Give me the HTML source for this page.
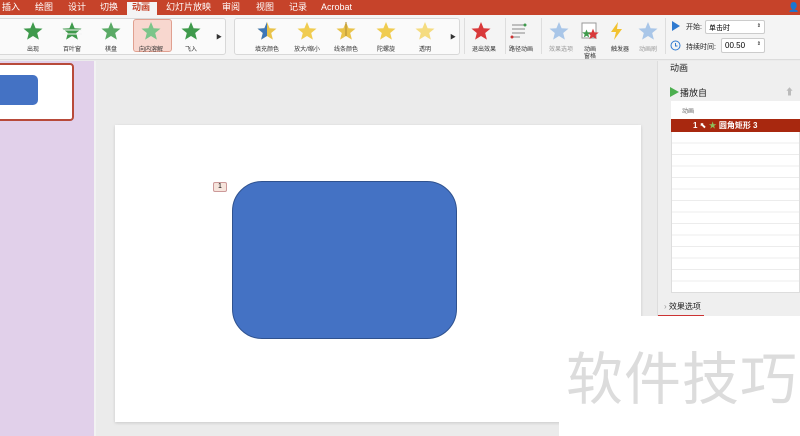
<!DOCTYPE html>
<html><head><meta charset="utf-8"><style>
*{margin:0;padding:0;box-sizing:border-box}
body{width:800px;height:436px;overflow:hidden;position:relative;background:#ebebeb;font-family:"Liberation Sans","Noto Sans CJK SC",sans-serif;}
.a{position:absolute}
.top{left:0;top:0;width:800px;height:15px;background:#c6432a}
.m{position:absolute;top:1px;font-size:9px;color:#fff;line-height:13px}
.rib{left:0;top:15px;width:800px;height:45px;background:#f4f4f4;border-bottom:1px solid #dcdcdc}
.lb{position:absolute;font-size:6px;color:#333;white-space:nowrap;transform:translateX(-50%);top:44px}
.ic{position:absolute;transform:translateX(-50%);top:21px}
.box{position:absolute;border:1px solid #d8d8d8;background:#fafafa;border-radius:3px}
</style></head><body>
<div class="a top"></div>
<div class="m" style="left:2px">插入</div>
<div class="m" style="left:35px">绘图</div>
<div class="m" style="left:68px">设计</div>
<div class="m" style="left:100px">切换</div>
<div class="a" style="left:127px;top:2px;width:30px;height:14px;background:#f4f4f4"></div>
<div class="m" style="left:132px;color:#c6432a;font-weight:bold">动画</div>
<div class="m" style="left:166px">幻灯片放映</div>
<div class="m" style="left:222px">审阅</div>
<div class="m" style="left:256px">视图</div>
<div class="m" style="left:289px">记录</div>
<div class="m" style="left:321px">Acrobat</div>
<div class="m" style="left:788px">👤</div>
<div class="a rib"></div>
<div class="box" style="left:-3px;top:18px;width:229px;height:37px"></div>
<div class="box" style="left:234px;top:18px;width:226px;height:37px"></div>
<div class="a" style="left:133px;top:19px;width:39px;height:33px;background:#f8d7cf;border:1px solid #e0a090;border-radius:3px"></div>
<svg width="0" height="0" style="position:absolute"><defs><polygon id="s" points="10,1 12.6,7.2 19.5,7.6 14.2,12 15.9,18.6 10,15 4.1,18.6 5.8,12 0.5,7.6 7.4,7.2"/></defs></svg>
<svg class="ic" style="left:33px" width="20" height="20"><use href="#s" fill="#3f9a4c"/></svg>
<svg class="ic" style="left:72px" width="20" height="20"><use href="#s" fill="#3f9a4c"/><path d="M0 9h20M0 13h20" stroke="#f4f4f4"/></svg>
<svg class="ic" style="left:111px" width="20" height="20"><use href="#s" fill="#5aaa66"/></svg>
<svg class="ic" style="left:151px" width="20" height="20"><use href="#s" fill="#7cc58a"/></svg>
<svg class="ic" style="left:191px" width="20" height="20"><use href="#s" fill="#3f9a4c"/></svg>
<div class="lb" style="left:33px">出现</div><div class="lb" style="left:72px">百叶窗</div><div class="lb" style="left:111px">棋盘</div><div class="lb" style="left:151px">向内溶解</div><div class="lb" style="left:191px">飞入</div>
<div class="a" style="left:216px;top:32px;font-size:6px;color:#333">▶</div>
<svg class="ic" style="left:267px" width="20" height="20"><use href="#s" fill="#e9c34a"/><path d="M10 1L7.4 7.2 0.5 7.6 5.8 12 4.1 18.6 10 15Z" fill="#3d77b8"/></svg>
<svg class="ic" style="left:307px" width="20" height="20"><use href="#s" fill="#f0cc50"/></svg>
<svg class="ic" style="left:346px" width="20" height="20"><use href="#s" fill="#e9c34a"/><path d="M10 1V15" stroke="#b08a30"/></svg>
<svg class="ic" style="left:386px" width="20" height="20"><use href="#s" fill="#f0cc50"/></svg>
<svg class="ic" style="left:425px" width="20" height="20"><use href="#s" fill="#f5dc80"/></svg>
<div class="lb" style="left:267px">填充颜色</div><div class="lb" style="left:307px">放大/缩小</div><div class="lb" style="left:346px">线条颜色</div><div class="lb" style="left:386px">陀螺旋</div><div class="lb" style="left:425px">透明</div>
<div class="a" style="left:450px;top:32px;font-size:6px;color:#333">▶</div>
<svg class="ic" style="left:481px" width="20" height="20"><use href="#s" fill="#d9393a"/></svg>
<svg class="ic" style="left:519px" width="20" height="20"><path d="M3 4h13M3 8h13M3 12h13M3 16h8" stroke="#888" fill="none"/><circle cx="16" cy="4" r="1.5" fill="#3f9a4c"/><circle cx="3" cy="16" r="1.5" fill="#c33"/></svg>
<svg class="ic" style="left:559px" width="20" height="20"><use href="#s" fill="#a9c6e8"/></svg>
<svg class="ic" style="left:590px" width="20" height="20"><rect x="2" y="2" width="14" height="15" fill="#fff" stroke="#999"/><use href="#s" fill="#d9393a" transform="translate(7,7) scale(.6)"/><use href="#s" fill="#3f9a4c" transform="translate(2,8) scale(.45)"/></svg>
<svg class="ic" style="left:617px" width="20" height="20"><path d="M11 1L4 11h5l-2 8 8-11h-5z" fill="#f2c230"/></svg>
<svg class="ic" style="left:648px" width="20" height="20"><use href="#s" fill="#a9c6e8"/></svg>
<div class="lb" style="left:484px">退出效果</div><div class="lb" style="left:521px">路径动画</div><div class="lb" style="left:561px;color:#999">效果选项</div><div class="lb" style="left:590px">动画</div><div class="lb" style="left:590px;top:51px">窗格</div><div class="lb" style="left:620px">触发器</div><div class="lb" style="left:648px;color:#999">动画刷</div>
<div class="a" style="left:464px;top:18px;width:1px;height:36px;background:#ddd"></div>
<div class="a" style="left:505px;top:18px;width:1px;height:36px;background:#ddd"></div>
<div class="a" style="left:541px;top:18px;width:1px;height:36px;background:#ddd"></div>
<div class="a" style="left:665px;top:18px;width:1px;height:36px;background:#ddd"></div>
<svg class="a" style="left:671px;top:21px" width="10" height="10"><path d="M1 0L9 5 1 10z" fill="#2f7ad0"/></svg>
<div class="a" style="left:686px;top:22px;font-size:7px;color:#222">开始:</div>
<div class="a" style="left:705px;top:20px;width:60px;height:14px;background:#fff;border:1px solid #ccc;border-radius:2px;font-size:7px;padding:2px 3px">单击时<span style="float:right;font-size:5px">⇕</span></div>
<svg class="a" style="left:670px;top:40px" width="11" height="11"><circle cx="5.5" cy="5.5" r="4.5" fill="none" stroke="#2f7ad0"/><path d="M5.5 3v3h2" stroke="#2f7ad0" fill="none"/></svg>
<div class="a" style="left:686px;top:42px;font-size:7px;color:#222">持续时间:</div>
<div class="a" style="left:721px;top:38px;width:44px;height:15px;background:#fff;border:1px solid #ccc;border-radius:2px;font-size:8px;padding:2px 3px">00.50<span style="float:right;font-size:5px">⇕</span></div>
<div class="a" style="left:0;top:61px;width:94px;height:375px;background:#e1d0ea"></div>
<div class="a" style="left:94px;top:61px;width:2px;height:375px;background:#f2f2f2"></div>
<div class="a" style="left:-4px;top:63px;width:78px;height:58px;background:#fff;border:2px solid #b84a3a;border-radius:4px"></div>
<div class="a" style="left:-6px;top:75px;width:44px;height:30px;background:#4472c4;border-radius:5px"></div>
<div class="a" style="left:115px;top:125px;width:526px;height:297px;background:#fff;box-shadow:0 1px 3px rgba(0,0,0,.15)"></div>
<div class="a" style="left:213px;top:182px;width:14px;height:10px;background:#f6e4dc;border:1px solid #c99;border-radius:2px;font-size:7px;text-align:center;line-height:8px">1</div>
<div class="a" style="left:232px;top:181px;width:225px;height:158px;background:#4472c4;border:1px solid #2f528f;border-radius:30px"></div>
<div class="a" style="left:657px;top:61px;width:143px;height:255px;background:#efefef;border-left:1px solid #ddd"></div>
<div class="a" style="left:670px;top:61px;font-size:9px;color:#222">动画</div>
<svg class="a" style="left:670px;top:87px" width="9" height="10"><path d="M0 0L9 5 0 10z" fill="#4caf50"/></svg>
<div class="a" style="left:680px;top:86px;font-size:9px;color:#222">播放自</div>
<div class="a" style="left:785px;top:85px;font-size:9px;color:#bbb">⬆</div>
<div class="a" style="left:671px;top:101px;width:129px;height:192px;background:#fff;border:1px solid #ddd;background-image:repeating-linear-gradient(#fff 0,#fff 10.5px,#ececec 10.5px,#ececec 11.5px);background-position:0 30px"></div>
<div class="a" style="left:671px;top:101px;width:129px;height:18px;background:#fff"></div>
<div class="a" style="left:682px;top:106px;font-size:6px;color:#666">动画</div>
<div class="a" style="left:671px;top:119px;width:129px;height:13px;background:#a8280f;color:#fff;font-size:8px;line-height:13px;padding-left:22px;font-weight:bold">1 <span style="font-weight:normal">⬉</span> <span style="color:#8cbf5a">★</span> 圆角矩形 3</div>
<div class="a" style="left:658px;top:294px;width:142px;height:22px;background:#efefef"></div>
<div class="a" style="left:664px;top:301px;font-size:8px;color:#222"><span style="color:#999">›</span> 效果选项</div>
<div class="a" style="left:658px;top:315px;width:46px;height:1px;background:#c33"></div>
<div class="a" style="left:559px;top:316px;width:241px;height:120px;background:#fff"></div>
<div class="a" style="left:566px;top:340px;font-size:57px;color:#dcdcdc;letter-spacing:1px;font-family:'Noto Sans CJK SC',sans-serif;line-height:70px">软件技巧</div>
</body></html>
